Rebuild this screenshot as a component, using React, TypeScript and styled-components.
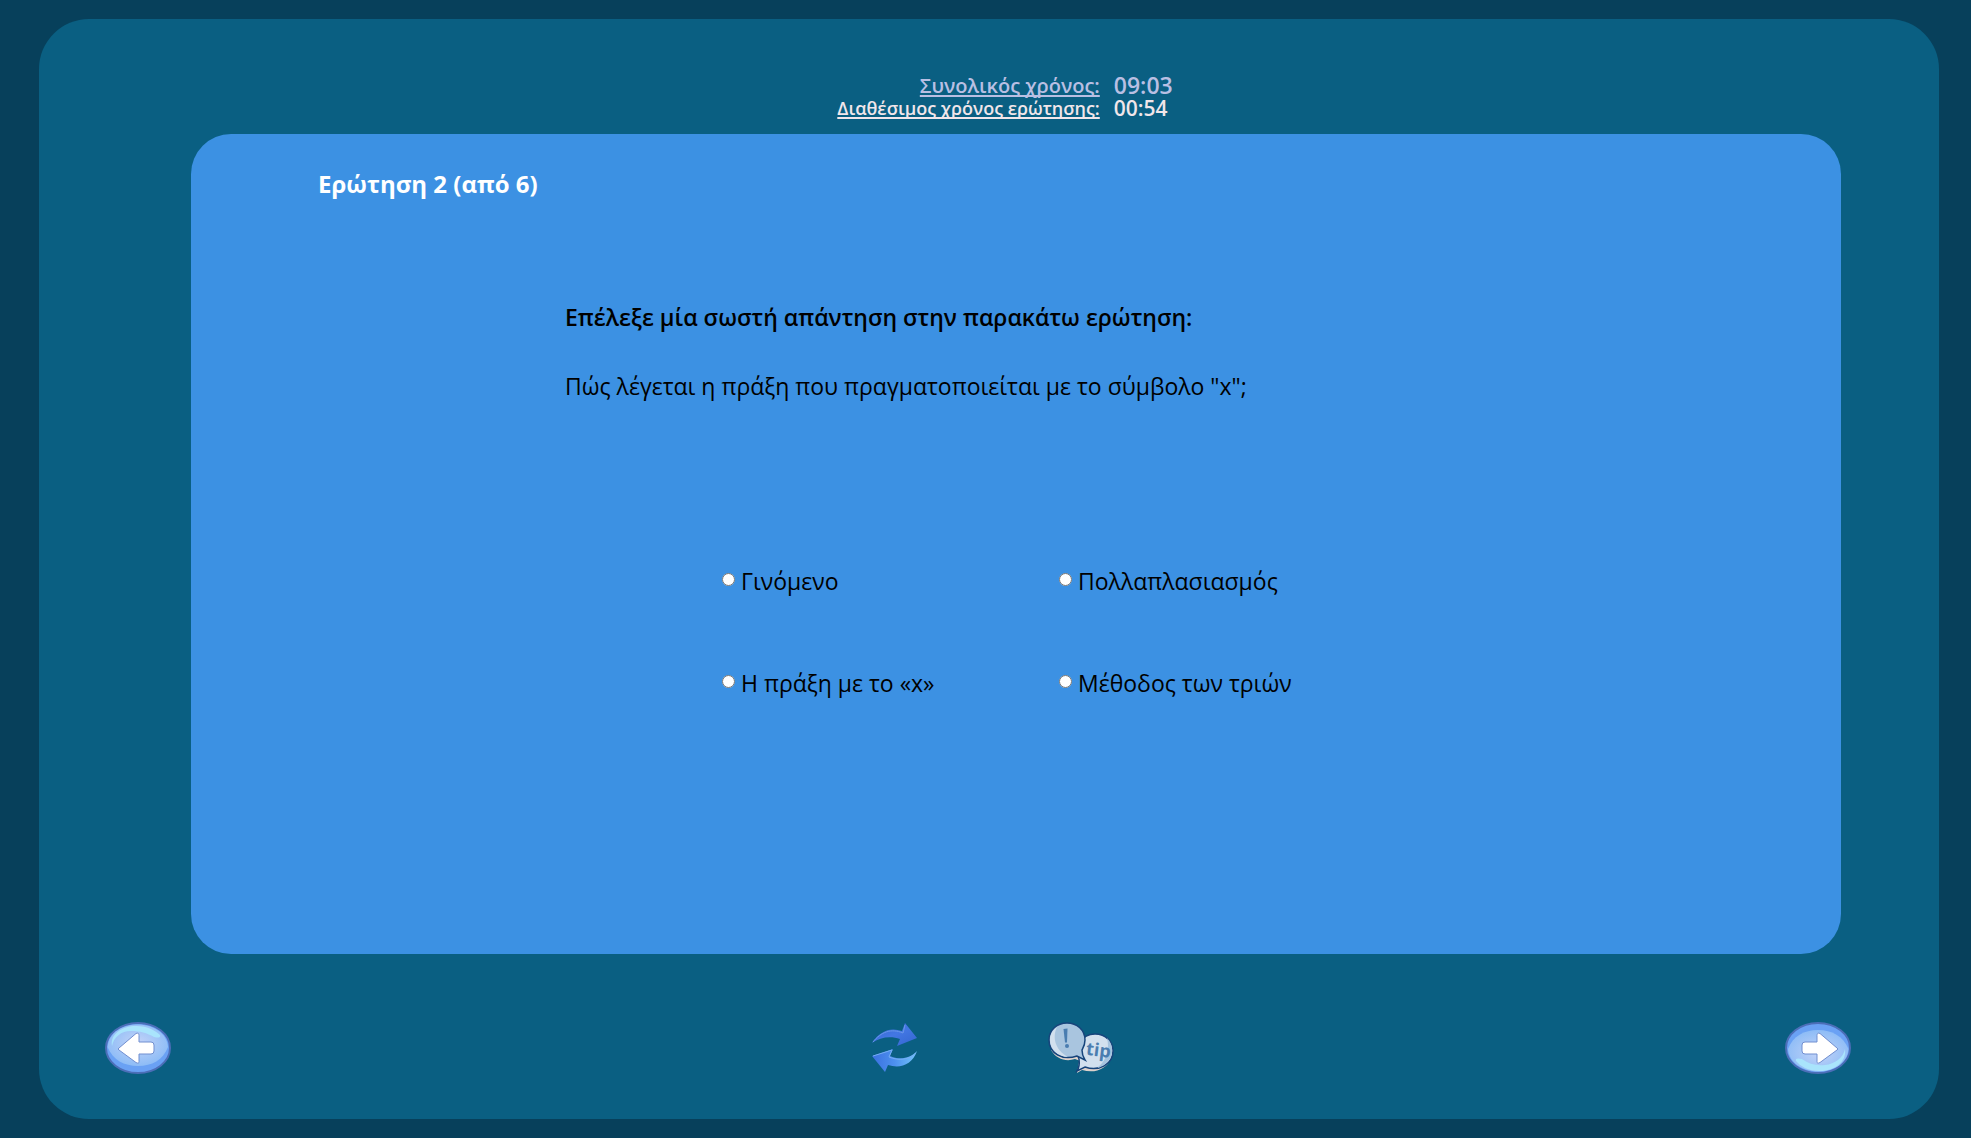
import React, { useState } from "react";
import styled, { createGlobalStyle } from "styled-components";

const GlobalStyle = createGlobalStyle`
  *, *::before, *::after { box-sizing: border-box; }
  body {
    margin: 0;
    background: #07405b;
    font-family: "Open Sans", "Noto Sans", sans-serif;
  }
`;

const Page = styled.div`
  display: flex;
  min-height: 100vh;
  padding: 19px 32px 19px 39px;
`;

const Frame = styled.main`
  display: flex;
  flex: 1;
  flex-direction: column;
  padding: 55px 88px 45px 66px;
  border-radius: 50px;
  background: #0a5f82;
`;

const Timers = styled.dl`
  display: grid;
  grid-template-columns: auto auto;
  justify-content: center;
  column-gap: 14px;
  margin: 0 0 14px;
  padding-left: 54px;
  font-weight: 600;
  line-height: 23px;
`;

const TimerLabel = styled.dt<{ $total?: boolean }>`
  color: ${(p) => (p.$total ? "#b9bfe3" : "#f1e6ea")};
  font-size: ${(p) => (p.$total ? "20px" : "18px")};
  text-align: right;
  text-decoration: underline;
  text-decoration-thickness: 2px;
  text-decoration-skip-ink: none;
  text-underline-offset: 2px;
`;

const TimerValue = styled.dd<{ $total?: boolean }>`
  margin: 0;
  color: ${(p) => (p.$total ? "#b9bfe3" : "#f1e6ea")};
  font-size: ${(p) => (p.$total ? "23px" : "21px")};
`;

const Panel = styled.form`
  display: flex;
  flex: 1;
  flex-direction: column;
  margin: 0 10px 0 86px;
  padding: 32px 127px;
  border-radius: 40px;
  background: #3c91e3;
`;

const Title = styled.h1`
  margin: 0;
  color: #fff;
  font-size: 24px;
  font-weight: 700;
  line-height: 36px;
`;

const Question = styled.fieldset`
  min-width: 0;
  margin: 97px 0 0;
  padding: 0 0 0 247px;
  border: 0;
`;

const Prompt = styled.legend`
  padding: 0;
  font-size: 23px;
  font-weight: 600;
  line-height: 36px;
`;

const QuestionText = styled.p`
  margin: 33px 0 0;
  font-size: 23px;
  line-height: 36px;
`;

const Answers = styled.div`
  display: grid;
  grid-template-columns: 337px 1fr;
  row-gap: 66px;
  margin: 159px 0 0 157px;
`;

const Answer = styled.label`
  display: flex;
  align-items: center;
  gap: 6px;
  font-size: 23px;
  line-height: 36px;
`;

const Radio = styled.input`
  width: 13px;
  height: 13px;
  margin: 0 0 3px;
`;

const Controls = styled.nav`
  display: flex;
  align-items: center;
  justify-content: space-between;
  margin-top: 68px;
`;

const Tools = styled.div`
  display: flex;
  align-items: center;
  gap: 120px;
  padding-left: 20px;
`;

const IconButton = styled.button`
  display: flex;
  align-items: center;
  justify-content: center;
  width: 66px;
  height: 52px;
  padding: 0;
  border: 0;
  background: none;
  cursor: pointer;
`;

function BackIcon() {
  return (
    <svg width="66" height="52" viewBox="0 0 66 52" aria-hidden="true">
      <defs>
        <radialGradient id="back-fill" cx="0.5" cy="0.45" r="0.6">
          <stop offset="0" stopColor="#c3d3f8" />
          <stop offset="1" stopColor="#88baf6" />
        </radialGradient>
      </defs>
      <ellipse cx="33" cy="26" rx="32" ry="25" fill="#6aa1f4" stroke="#4c6eb8" strokeWidth="2" />
      <path d="M2.500 25C4 10 18 2.500 33 2.500S62 11 63 25C58 38 47 44 33 44S8 38 2.500 25Z" fill="url(#back-fill)" />
      <path d="M7 24C5 12 17 4 31 4c12 0 20 5 24 9 1 3-2 3-6 2C42 11 35 9 26 9 16 9 9 15 7 24Z" fill="#a9e4fc" />
      <path d="M14 26 31 11.500c2-1 3 0 3 2V20h12q3 0 3 3v6q0 3-3 3H34v7.500c0 2-1 2-3 1L14 28q-2-1 0-2Z" fill="#fff" stroke="#718fd0" strokeWidth="1" />
    </svg>
  );
}

function NextIcon() {
  return (
    <svg width="66" height="52" viewBox="0 0 66 52" aria-hidden="true">
      <defs>
        <radialGradient id="next-fill" cx="0.5" cy="0.55" r="0.6">
          <stop offset="0" stopColor="#c3d3f8" />
          <stop offset="1" stopColor="#88baf6" />
        </radialGradient>
      </defs>
      <ellipse cx="33" cy="26" rx="32" ry="25" fill="#6aa1f4" stroke="#4c6eb8" strokeWidth="2" />
      <path d="M63.500 27C62 42 48 49.500 33 49.500S4 41 3 27C8 14 19 8 33 8S58 14 63.500 27Z" fill="url(#next-fill)" />
      <path d="M60 27c2 13-11 22-25 22-12 0-20-5-24-10-1-3 2-3 6-2 7 5 14 7 23 6 10-1 18-7 20-16Z" fill="#a9e4fc" />
      <path d="M52 26 35 11.500c-2-1-3 0-3 2V20H20q-3 0-3 3v6q0 3 3 3h12v7.500c0 2 1 2 3 1L52 28q2-1 0-2Z" fill="#fff" stroke="#718fd0" strokeWidth="1" />
    </svg>
  );
}

function RefreshIcon() {
  return (
    <svg width="46" height="50" viewBox="0 0 46 50" aria-hidden="true">
      <defs>
        <linearGradient id="refresh-top" x1="0" y1="0" x2="1" y2="1">
          <stop offset="0" stopColor="#3365cf" />
          <stop offset="0.5" stopColor="#4377e3" />
          <stop offset="1" stopColor="#3365d0" />
        </linearGradient>
        <linearGradient id="refresh-bottom" x1="0" y1="0" x2="1" y2="0">
          <stop offset="0" stopColor="#3a70df" />
          <stop offset="0.5" stopColor="#4d90ef" />
          <stop offset="1" stopColor="#73c4fb" />
        </linearGradient>
      </defs>
      <path d="M0 20C8 8 18 4 30 8L33 0 45 15 25 23 28 16C19 13 8 14 0 20Z" fill="url(#refresh-top)" />
      <path d="M1 19C9 9 19 5 31 10L33 2" fill="none" stroke="#6996e9" strokeWidth="1" />
      <path d="M45 28C40 42 28 46 16 42L13 49 0 33 21 26 18 33C27 37 38 36 45 28Z" fill="url(#refresh-bottom)" />
      <path d="M1 33 20 27 17 34C27 38 37 37 44 30" fill="none" stroke="#75adf3" strokeWidth="1" />
    </svg>
  );
}

const BubbleText = styled.text`
  fill: #4a7db0;
  font-family: "Open Sans", sans-serif;
  font-size: 18px;
  font-weight: 700;
`;

function TipIcon() {
  return (
    <svg width="66" height="52" viewBox="0 0 66 52" aria-hidden="true">
      <path d="M3 28C8 37 18 40 27 37l8 3V32M29 51l5-3c13 4 25-1 29-12l-8-3-24 7Z" fill="#ddd1cb" />
      <path d="M31 37C26 27 33 12 47 12c11 0 18 8 18 17 0 13-14 21-28 16l-8 4q3-5 2-12Z" fill="#d2e0ee" stroke="#17447b" strokeWidth="1.5" />
      <path d="M59 16c10 10 5 27-10 30 9-7 13-18 10-30Z" fill="#a6c3de" />
      <path d="M1 18C1 8 9 1 19 1s18 7 18 17c0 5-2 8-3 10 0 4 1 7 3 10l-8-4C14 39 1 31 1 18Z" fill="#a9c5df" stroke="#17447b" strokeWidth="1.5" />
      <path d="M9 5C4 15 7 28 20 35 10 35 2 27 2 18 2 12 5 8 9 5Z" fill="#d2e0ee" />
      <path d="m15.500 7 4-.5-.5 14h-2Z" fill="#4a7db0" />
      <circle cx="19" cy="24" r="2" fill="#4a7db0" />
      <BubbleText x="38" y="34" transform="rotate(7 47 30)">tip</BubbleText>
    </svg>
  );
}

const OPTIONS = ["Γινόμενο", "Πολλαπλασιασμός", "Η πράξη με το «x»", "Μέθοδος των τριών"];

export default function App() {
  const [choice, setChoice] = useState<string | null>(null);

  return (
    <>
      <GlobalStyle />
      <Page>
        <Frame>
          <Timers>
            <TimerLabel $total>Συνολικός χρόνος:</TimerLabel>
            <TimerValue $total>09:03</TimerValue>
            <TimerLabel>Διαθέσιμος χρόνος ερώτησης:</TimerLabel>
            <TimerValue>00:54</TimerValue>
          </Timers>
          <Panel>
            <Title>Ερώτηση 2 (από 6)</Title>
            <Question>
              <Prompt>Επέλεξε μία σωστή απάντηση στην παρακάτω ερώτηση:</Prompt>
              <QuestionText>Πώς λέγεται η πράξη που πραγματοποιείται με το σύμβολο "x";</QuestionText>
              <Answers>
                {OPTIONS.map((option) => (
                  <Answer key={option}>
                    <Radio
                      type="radio"
                      name="answer"
                      checked={choice === option}
                      onChange={() => setChoice(option)}
                    />
                    {option}
                  </Answer>
                ))}
              </Answers>
            </Question>
          </Panel>
          <Controls>
            <IconButton type="button" aria-label="Προηγούμενη ερώτηση">
              <BackIcon />
            </IconButton>
            <Tools>
              <IconButton type="button" aria-label="Επαναφορά" onClick={() => setChoice(null)}>
                <RefreshIcon />
              </IconButton>
              <IconButton type="button" aria-label="Βοήθεια">
                <TipIcon />
              </IconButton>
            </Tools>
            <IconButton type="button" aria-label="Επόμενη ερώτηση">
              <NextIcon />
            </IconButton>
          </Controls>
        </Frame>
      </Page>
    </>
  );
}
